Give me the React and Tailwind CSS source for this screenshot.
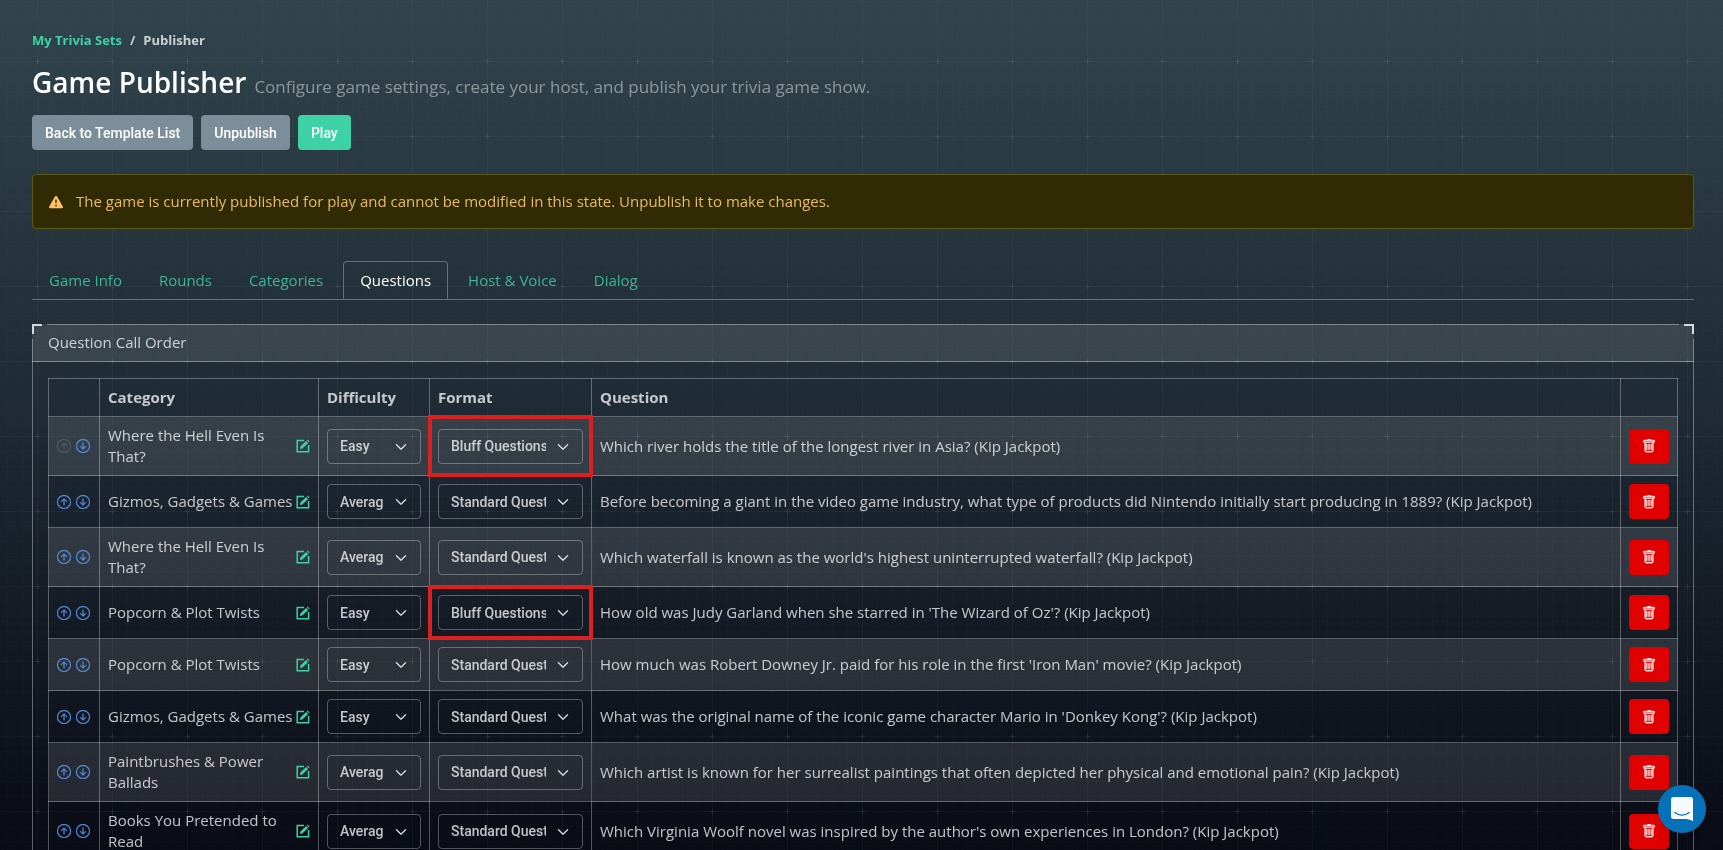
import { BsArrowUpCircle, BsArrowDownCircle, BsTrash, BsChevronDown, BsExclamationTriangleFill } from "react-icons/bs";

const TABS = ["Game Info", "Rounds", "Categories", "Questions", "Host & Voice", "Dialog"];

const ROWS = [
  { category: "Where the Hell Even Is That?", difficulty: "Easy", format: "Bluff Questions", marked: true, question: "Which river holds the title of the longest river in Asia? (Kip Jackpot)" },
  { category: "Gizmos, Gadgets & Games", difficulty: "Average", format: "Standard Questions", question: "Before becoming a giant in the video game industry, what type of products did Nintendo initially start producing in 1889? (Kip Jackpot)" },
  { category: "Where the Hell Even Is That?", difficulty: "Average", format: "Standard Questions", question: "Which waterfall is known as the world's highest uninterrupted waterfall? (Kip Jackpot)" },
  { category: "Popcorn & Plot Twists", difficulty: "Easy", format: "Bluff Questions", marked: true, question: "How old was Judy Garland when she starred in 'The Wizard of Oz'? (Kip Jackpot)" },
  { category: "Popcorn & Plot Twists", difficulty: "Easy", format: "Standard Questions", question: "How much was Robert Downey Jr. paid for his role in the first 'Iron Man' movie? (Kip Jackpot)" },
  { category: "Gizmos, Gadgets & Games", difficulty: "Easy", format: "Standard Questions", question: "What was the original name of the iconic game character Mario in 'Donkey Kong'? (Kip Jackpot)" },
  { category: "Paintbrushes & Power Ballads", difficulty: "Average", format: "Standard Questions", question: "Which artist is known for her surrealist paintings that often depicted her physical and emotional pain? (Kip Jackpot)" },
  { category: "Books You Pretended to Read", difficulty: "Average", format: "Standard Questions", question: "Which Virginia Woolf novel was inspired by the author's own experiences in London? (Kip Jackpot)" },
];

function GridBackground() {
  return (
    <div className="fixed inset-0 -z-10 bg-linear-to-b from-[#31444d] via-[#1e2933] via-50% to-[#090b15]">
      <svg className="size-full" aria-hidden="true">
        <defs>
          <pattern id="grid" width="75" height="75" x="37" y="61" patternUnits="userSpaceOnUse">
            <g fill="#a9d8e8">
              <g fillOpacity="0.012">
                <path d="M15 0h1v75h-1zM30 0h1v75h-1zM45 0h1v75h-1zM60 0h1v75h-1z" />
                <path d="M0 15h75v1h-75zM0 30h75v1h-75zM0 45h75v1h-75zM0 60h75v1h-75z" />
              </g>
              <path fillOpacity="0.04" d="M0 0h75v1H0zM0 0h1v75H0z" />
              <path fillOpacity="0.1" d="M0 0h3v1H0zM73 0h2v1h-2zM0 1h1v2H0zM0 73h1v2H0z" />
            </g>
          </pattern>
        </defs>
        <rect width="100%" height="100%" fill="url(#grid)" />
      </svg>
    </div>
  );
}

function EditIcon() {
  return (
    <svg viewBox="0 0 14 14" className="size-[14px]" aria-hidden="true">
      <path d="M8 1.4H1.2V12.8H12.6V6" fill="none" stroke="currentColor" strokeWidth="1.5" />
      <path d="M10.1 1.9 12.1 3.9 6.4 9.6 3.9 10.1 4.4 7.6Z M10.8 1.2 11.6 .4 13.6 2.4 12.8 3.2Z" fill="currentColor" />
    </svg>
  );
}

function Select({ label, value, options }) {
  return (
    <div className="relative">
      <select
        aria-label={label}
        defaultValue={value}
        className="block h-[35px] w-full appearance-none rounded border border-white/30 bg-transparent pr-9 pl-3 font-['Roboto',sans-serif] text-sm font-medium text-white/75"
      >
        {options.map((o) => (
          <option key={o} className="bg-[#1d2630]">{o}</option>
        ))}
      </select>
      <BsChevronDown className="pointer-events-none absolute top-3 right-[14px] size-3 stroke-1 text-white/85" aria-hidden="true" />
    </div>
  );
}

function Button({ className, children }) {
  return (
    <button type="button" className={`h-[35px] rounded px-[13px] font-['Roboto',sans-serif] text-sm font-medium text-white ${className}`}>
      {children}
    </button>
  );
}

export default function App() {
  const cell = "border border-white/30 px-2";
  return (
    <div className="min-h-screen px-8 pt-7 pb-8 font-['Open_Sans',sans-serif] text-[15px] leading-[21px] text-white/75 lg:pr-[29px]">
      <GridBackground />

      <nav aria-label="Breadcrumb" className="mb-3 flex h-6 items-center gap-2 text-[13px] font-bold">
        <a href="#sets" className="text-[#3cd2a5]">My Trivia Sets</a>
        <span>/</span>
        <span>Publisher</span>
      </nav>

      <header className="mb-[15px] flex min-h-9 flex-wrap items-baseline gap-x-2">
        <h1 className="text-[28px] leading-9 font-semibold text-white">Game Publisher</h1>
        <p className="text-[17px] text-white/45">Configure game settings, create your host, and publish your trivia game show.</p>
      </header>

      <div className="flex flex-wrap gap-2">
        <Button className="bg-[#7b8e99]">Back to Template List</Button>
        <Button className="bg-[#7b8e99]">Unpublish</Button>
        <Button className="bg-[#3cd2a5]">Play</Button>
      </div>

      <div role="alert" className="mt-6 flex items-center gap-3 rounded border border-[#5c5a12] bg-[#302b04] px-[15px] py-4 text-[#e9bb62]">
        <BsExclamationTriangleFill className="size-4 shrink-0 p-px text-[#ffc163]" aria-hidden="true" />
        The game is currently published for play and cannot be modified in this state. Unpublish it to make changes.
      </div>

      <div role="tablist" className="mt-8 flex gap-[3px] border-b border-white/30">
        {TABS.map((t) => (
          <button
            key={t}
            type="button"
            role="tab"
            aria-selected={t === "Questions"}
            className="h-[38px] rounded-t border border-b-0 border-transparent px-4 text-[#3cb595] aria-selected:border-white/30 aria-selected:text-white"
          >
            {t}
          </button>
        ))}
      </div>

      <section className="relative mt-6">
        <span className="absolute inset-x-[15px] top-0 h-px bg-white/35" />
        <span className="absolute top-[15px] bottom-0 left-0 w-px bg-white/35" />
        <span className="absolute top-[15px] right-0 bottom-0 w-px bg-white/35" />
        <span className="absolute top-0 left-0 size-[10px] border-t-2 border-l-2 border-[#d0dae2]" />
        <span className="absolute top-0 right-0 size-[10px] border-t-2 border-r-2 border-[#d0dae2]" />
        <h2 className="border-b border-white/35 bg-white/11 px-4 py-2">Question Call Order</h2>
        <div className="p-4">
          <table className="w-full table-fixed border-collapse text-left">
            <colgroup>
              <col className="w-[51px]" />
              <col className="w-[219px]" />
              <col className="w-[111px]" />
              <col className="w-[162px]" />
              <col />
              <col className="w-[57px]" />
            </colgroup>
            <thead>
              <tr className="h-[38px]">
                <th className={cell}></th>
                <th className={cell}>Category</th>
                <th className={cell}>Difficulty</th>
                <th className={cell}>Format</th>
                <th className={cell}>Question</th>
                <th className={cell}></th>
              </tr>
            </thead>
            <tbody>
              {ROWS.map((r, i) => (
                <tr key={i} className="odd:bg-white/11">
                  <td className={cell}>
                    <div className="flex gap-[5px] text-[#5b95e6]">
                      <button type="button" aria-label="Move up" disabled={i === 0} className="disabled:text-white/15">
                        <BsArrowUpCircle className="size-[14px] stroke-[0.3]" />
                      </button>
                      <button type="button" aria-label="Move down">
                        <BsArrowDownCircle className="size-[14px] stroke-[0.3]" />
                      </button>
                    </div>
                  </td>
                  <td className="border border-white/30 p-2">
                    <div className="flex items-center justify-between">
                      <span>{r.category}</span>
                      <button type="button" aria-label="Edit category" className="shrink-0 text-[#3cd2a5]">
                        <EditIcon />
                      </button>
                    </div>
                  </td>
                  <td className="border border-white/30 p-2">
                    <Select label="Difficulty" value={r.difficulty} options={["Easy", "Average", "Hard"]} />
                  </td>
                  <td className="relative border border-white/30 p-2">
                    <Select label="Format" value={r.format} options={["Standard Questions", "Bluff Questions"]} />
                    {r.marked && <span className="pointer-events-none absolute -inset-0.5 border-4 border-[#dc2020]" />}
                  </td>
                  <td className={cell}>{r.question}</td>
                  <td className="border border-white/30 p-2">
                    <button type="button" aria-label="Delete question" className="flex h-[35px] w-10 items-center justify-center rounded bg-[#e00000] text-white">
                      <BsTrash className="size-[14px] stroke-[0.4]" />
                    </button>
                  </td>
                </tr>
              ))}
            </tbody>
          </table>
        </div>
      </section>

      <button type="button" aria-label="Open chat" className="fixed right-[17px] bottom-[17px] flex size-12 items-center justify-center rounded-full bg-[#0671b8] shadow-lg">
        <svg viewBox="0 0 22 24" className="h-6 w-[22px]" aria-hidden="true">
          <path d="M2.5 0H19.5Q22 0 22 2.5V24Q18.5 22.6 15.5 22H2.5Q0 22 0 19.5V2.5Q0 0 2.5 0Z" fill="#f7fafc" />
          <path d="M3.8 15.5Q11 20.8 18.2 15.5" fill="none" stroke="#0671b8" strokeWidth="1.3" strokeLinecap="round" />
        </svg>
      </button>
    </div>
  );
}
